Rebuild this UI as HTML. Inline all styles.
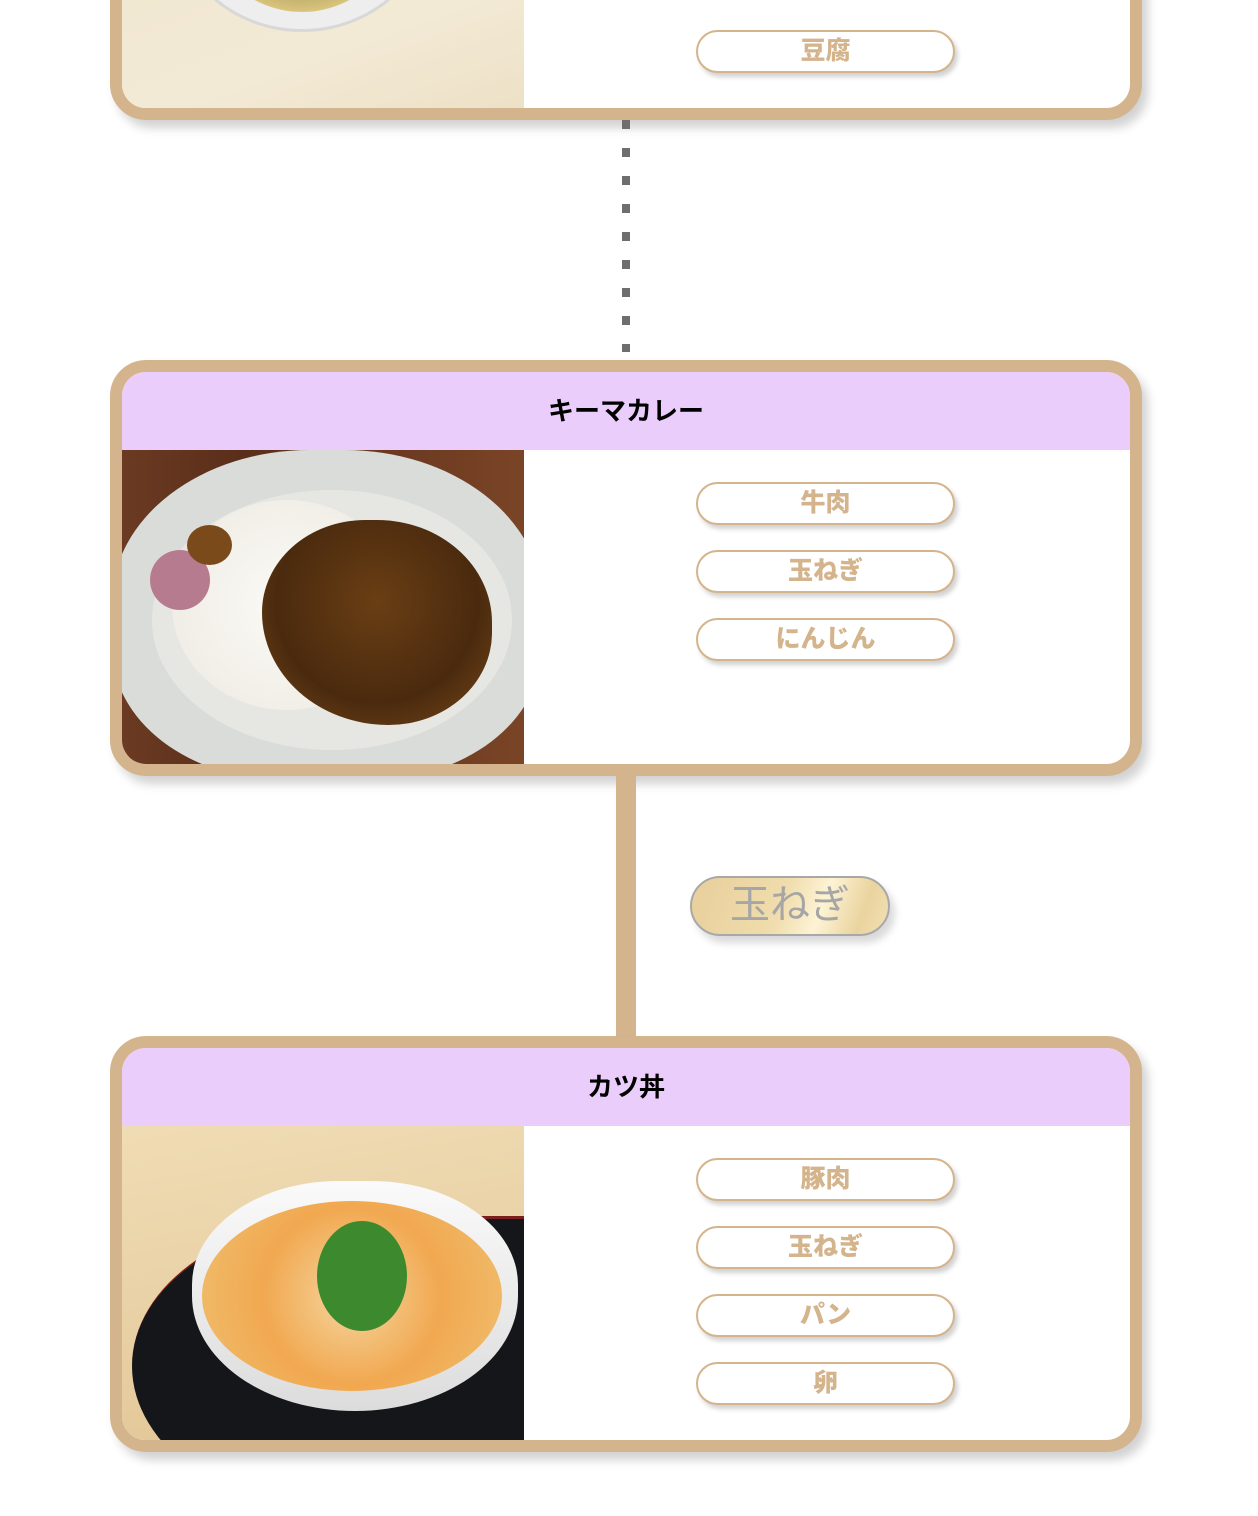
<!DOCTYPE html>
<html><head><meta charset="utf-8"><style>
*{margin:0;padding:0;box-sizing:border-box}
body{width:1258px;height:1516px;background:#fff;position:relative;overflow:hidden;font-family:"Liberation Sans","Noto Sans CJK JP",sans-serif}
.card{position:absolute;left:110px;width:1032px;border:12px solid #d4b48c;border-radius:36px;background:#fff;overflow:hidden;box-shadow:6px 8px 10px rgba(0,0,0,.18)}
.hd{height:78px;background:#ebcdfb;text-align:center;line-height:78px;font-weight:bold;font-size:26px;color:#000}
.img{position:absolute;left:0;width:402px;overflow:hidden}
.pill{position:absolute;left:574px;width:259px;height:43px;border:2px solid #d4b48c;border-radius:22px;background:#fff;color:#d4b48c;font-weight:900;font-size:25px;text-align:center;line-height:39px;box-shadow:3px 4px 5px rgba(0,0,0,.18)}
</style></head><body>

<div class="card" style="top:-100px;height:220px">
  <div class="img" style="top:0;height:208px;background:linear-gradient(160deg,#efe6cf,#f3ead6 60%,#ece0c4)">
    <div style="position:absolute;left:50px;top:-120px;width:260px;height:240px;border-radius:50%;background:#eeeeee;border:3px solid #d8d8d8"></div>
    <div style="position:absolute;left:80px;top:-100px;width:200px;height:200px;border-radius:50%;background:radial-gradient(circle,#b7a27a,#8f8a5a 40%,#d9c37a 70%,#eee 75%)"></div>
  </div>
  <div class="pill" style="top:118px">豆腐</div>
</div>

<div style="position:absolute;left:622px;top:120px;width:8px;height:232px;background:repeating-linear-gradient(#6e6e6e 0 9px,transparent 9px 28px)"></div>

<div class="card" style="top:360px;height:416px">
  <div class="hd">キーマカレー</div>
  <div class="img" style="top:78px;height:314px;background:linear-gradient(90deg,#6b3a22,#5a2e1a 30%,#7a4426)">
    <div style="position:absolute;left:-10px;top:0;width:430px;height:330px;border-radius:46% 46% 40% 40%;background:#d9dcd8"></div>
    <div style="position:absolute;left:30px;top:40px;width:360px;height:260px;border-radius:50%;background:#e6e7e3"></div>
    <div style="position:absolute;left:50px;top:50px;width:230px;height:210px;border-radius:50%;background:radial-gradient(circle,#fbfaf6,#ece9e0)"></div>
    <div style="position:absolute;left:140px;top:70px;width:230px;height:205px;border-radius:45% 50% 45% 55%;background:radial-gradient(circle at 50% 40%,#6a3e14,#4a2a0e 60%,#7a4a1a)"></div>
    <div style="position:absolute;left:28px;top:100px;width:60px;height:60px;border-radius:50%;background:#b77b90"></div>
    <div style="position:absolute;left:65px;top:75px;width:45px;height:40px;border-radius:50%;background:#7a4a1a"></div>
  </div>
  <div class="pill" style="top:110px">牛肉</div>
  <div class="pill" style="top:178px">玉ねぎ</div>
  <div class="pill" style="top:246px">にんじん</div>
</div>

<div style="position:absolute;left:616px;top:776px;width:20px;height:262px;background:#d4b48c"></div>

<div style="position:absolute;left:690px;top:876px;width:200px;height:60px;border:2px solid #a8a8a8;border-radius:30px;background:linear-gradient(110deg,#e8cf9c,#f0dcac 45%,#fdf3d4 65%,#ead39e 85%,#f2e0b4);color:#a6a6a6;font-size:40px;text-align:center;line-height:55px;box-shadow:5px 7px 8px rgba(0,0,0,.15)">玉ねぎ</div>

<div class="card" style="top:1036px;height:416px">
  <div class="hd">カツ丼</div>
  <div class="img" style="top:78px;height:314px;background:linear-gradient(170deg,#f0dcb4,#e9d1a6 50%,#e2c494)">
    <div style="position:absolute;left:10px;top:90px;width:440px;height:300px;border-radius:50% 0 0 50%;background:#15161a;border-top:3px solid #7a1e1e"></div>
    <div style="position:absolute;left:70px;top:55px;width:326px;height:230px;border-radius:45% 45% 50% 50%;background:linear-gradient(#fafafa,#dcdcdc)"></div>
    <div style="position:absolute;left:80px;top:75px;width:300px;height:190px;border-radius:50%;background:radial-gradient(circle,#f5d6a0,#f1a850 50%,#f0c070)"></div>
    <div style="position:absolute;left:195px;top:95px;width:90px;height:110px;border-radius:50%;background:#3d8a2e"></div>
  </div>
  <div class="pill" style="top:110px">豚肉</div>
  <div class="pill" style="top:178px">玉ねぎ</div>
  <div class="pill" style="top:246px">パン</div>
  <div class="pill" style="top:314px">卵</div>
</div>

</body></html>
